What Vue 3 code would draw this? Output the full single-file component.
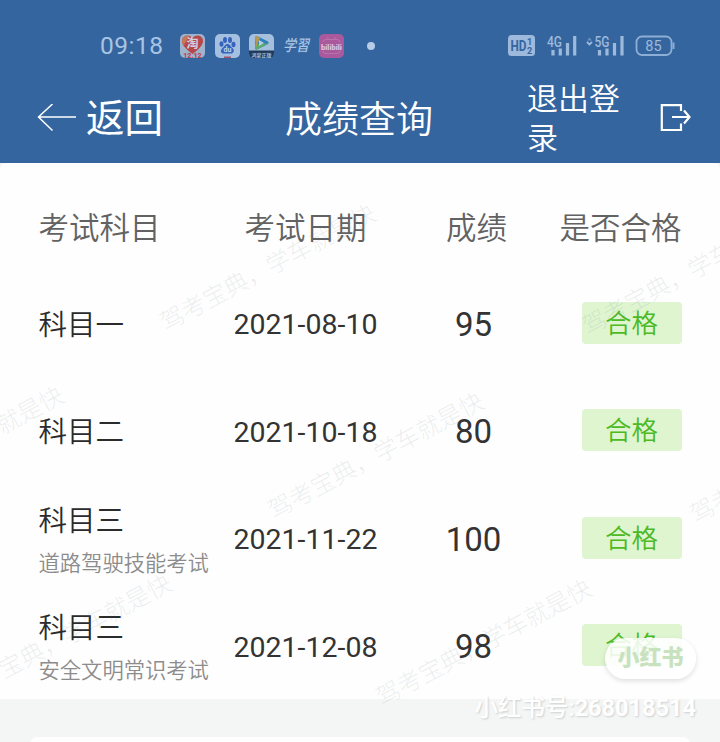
<template>
  <div class="page">
    <div class="status-bar">
      <span class="time">09:18</span>
      <div class="apps">
        <svg width="25" height="24" viewBox="0 0 25 24">
          <rect width="25" height="24" rx="5" fill="#9fb3cd" />
          <path d="M12.5 20 C6 15 1.500 11 2 6 C3 1 9 0 12.500 4 C16 0 22 1 23 6 C23.500 11 19 15 12.500 20Z" fill="#b8474c" />
          <path d="M2 6 C3 2 6 1 9 2 L4 11 Q1.500 9 2 6Z" fill="#c37958" />
          <text x="12.500" y="14" text-anchor="middle" class="app-tao">淘</text>
          <text x="12.500" y="23.500" text-anchor="middle" class="app-date">12.12</text>
        </svg>
        <svg width="25" height="24" viewBox="0 0 25 24">
          <rect width="25" height="24" rx="5" fill="#a5bfe0" />
          <g fill="#3664bd">
            <ellipse cx="6.500" cy="10" rx="2" ry="2.800" />
            <ellipse cx="10" cy="6" rx="2" ry="2.900" />
            <ellipse cx="15" cy="6" rx="2" ry="2.900" />
            <ellipse cx="18.500" cy="10.500" rx="2" ry="2.800" />
            <path d="M12.500 10 C15 10 15.500 12.500 18 14.500 C20 17 18 20 15.500 19.500 H9.500 C6 20 5 17 7 14.500 C9.500 12.500 10 10 12.500 10Z" />
          </g>
          <text x="12.500" y="18.300" text-anchor="middle" class="app-du">du</text>
          <rect x="9" y="22.500" width="7" height="1.500" fill="#a5536b" />
        </svg>
        <svg width="25" height="24" viewBox="0 0 25 24">
          <rect width="25" height="24" rx="5" fill="#a5bfdc" />
          <path d="M0 16.500 H25 V19 Q25 24 20 24 H5 Q0 24 0 19Z" fill="#203a5a" />
          <path d="M6 4 Q6 1.500 8 2 L19 7.500 Q20.500 9 19 10 L8 15.500 Q6 16 6 14Z" fill="#2f80bd" />
          <path d="M6 10 L19.500 9.500 L8 15.500 Q6 16 6 14Z" fill="#5bab68" />
          <path d="M6 4 Q6 1.500 8 2 L11 4 L7 13Z" fill="#b79754" />
          <path d="M10 6 L15 9 L10 12Z" fill="#b5cfdf" />
          <text x="12.500" y="22.500" text-anchor="middle" class="app-tv">鸿蒙正版</text>
        </svg>
        <span class="xuexi">学習</span>
        <svg width="25" height="24" viewBox="0 0 25 24">
          <rect width="25" height="24" rx="5" fill="#aa5a9c" />
          <path d="M8 3 L10 6 M17 3 L15 6 M4 8 Q4 5.500 7 5.500 H18 Q21 5.500 21 8 M4 17 Q4 19.500 7 19.500 H18 Q21 19.500 21 17" fill="none" stroke="#b973ac" stroke-width="1" />
          <text x="12.500" y="15.500" text-anchor="middle" class="app-bili">bilibili</text>
        </svg>
      </div>
      <span class="dot"></span>
      <div class="signals">
        <svg class="hd" width="27" height="21" viewBox="0 0 27 21">
          <rect width="27" height="21" rx="3.500" fill="#9db9db" />
          <text x="2.500" y="15.800" class="hd-text" textLength="16" lengthAdjust="spacingAndGlyphs">HD</text>
          <text x="19" y="9.800" class="hd-num">1</text>
          <text x="19" y="18.800" class="hd-num">2</text>
        </svg>
        <svg class="g4" width="30" height="22" viewBox="0 0 30 22">
          <text x="0" y="11.800" class="net" textLength="15" lengthAdjust="spacingAndGlyphs">4G</text>
          <path d="M6 20.500 V15 M13.300 20.500 V13.500 M20.500 20.500 V8 M27.700 20.500 V1" class="bars" />
        </svg>
        <svg class="g5" width="39" height="22" viewBox="0 0 39 22">
          <path d="M1 5.500 L3.500 2.500 L6 5.500" fill="#6791c3" />
          <path d="M1 7 L3.500 9.500 L6 7" fill="none" stroke="#9db9db" stroke-width="1.800" />
          <text x="8.500" y="11.800" class="net" textLength="15" lengthAdjust="spacingAndGlyphs">5G</text>
          <path d="M13.500 20.500 V15 M21 20.500 V13.500 M28.500 20.500 V8 M36 20.500 V1" class="bars" />
        </svg>
        <svg class="battery" width="40" height="22" viewBox="0 0 40 22">
          <rect x="1.500" y="1.500" width="35" height="18.500" rx="5.500" fill="none" stroke="#8daed5" stroke-width="1.800" />
          <path d="M38.500 7.500 V14" stroke="#8daed5" stroke-width="2" />
          <text x="18.500" y="15.700" text-anchor="middle" class="level">85</text>
        </svg>
      </div>
    </div>

    <header class="nav">
      <div class="back">
        <svg width="40" height="30" viewBox="0 0 40 30">
          <path d="M39 13 H2 M15.500 0 L1.500 13 L15.500 26.500" fill="none" stroke="#fff" stroke-width="1.500" />
        </svg>
        <span>返回</span>
      </div>
      <h1>成绩查询</h1>
      <div class="logout">
        <span>退出登录</span>
        <svg width="32" height="30" viewBox="0 0 32 30">
          <path d="M21 7 V0.500 M22 1.100 H1.800 V26 H21 V19.500 M12 13 H29 M24 6.500 L29.500 13 L24 19.500" fill="none" stroke="#fff" stroke-width="2.200" />
        </svg>
      </div>
    </header>

    <main class="content">
      <section class="scores">
        <div class="row head">
          <span>考试科目</span>
          <span class="center">考试日期</span>
          <span class="center">成绩</span>
          <span class="right">是否合格</span>
        </div>
        <div v-for="(item, index) in exams" :key="index" class="row">
          <div>
            <div class="subject">{{ item.subject }}</div>
            <div v-if="item.note" class="note">{{ item.note }}</div>
          </div>
          <span class="date center">{{ item.date }}</span>
          <span class="score center">{{ item.score }}</span>
          <div class="right"><span class="tag">合格</span></div>
        </div>
      </section>
      <section class="next-card"></section>
    </main>

    <!-- Slanted watermark tiles over the list -->
    <span
      v-for="(m, index) in marks"
      :key="'m' + index"
      class="mark"
      :style="{ left: m.x + 'px', top: m.y + 'px' }"
    >驾考宝典，学车就是快</span>

    <div class="logo">小红书</div>
    <div class="account">小红书号:<b>268018514</b></div>
  </div>
</template>

<script setup>
import { ref } from 'vue'

const exams = ref([
  { subject: '科目一', note: '', date: '2021-08-10', score: 95 },
  { subject: '科目二', note: '', date: '2021-10-18', score: 80 },
  { subject: '科目三', note: '道路驾驶技能考试', date: '2021-11-22', score: 100 },
  { subject: '科目三', note: '安全文明常识考试', date: '2021-12-08', score: 98 }
])

// Centre point of each tile
const marks = [
  { x: 268, y: 268 },
  { x: 690, y: 272 },
  { x: -44, y: 450 },
  { x: 376, y: 456 },
  { x: 798, y: 460 },
  { x: 64, y: 638 },
  { x: 484, y: 643 }
]
</script>

<style>
body {
  margin: 0;
  background: #f4f5f5;
}
</style>

<style scoped>
.page {
  position: relative;
  width: 720px;
  height: 742px;
  overflow: hidden;
  background: #34659f;
  font-family: Roboto, "Noto Sans CJK SC", sans-serif;
  font-weight: 350;
  white-space: nowrap;
}

.status-bar {
  display: flex;
  align-items: center;
  box-sizing: border-box;
  height: 75px;
  padding: 16px 45px 0 100px;
  color: #a9c4e3;
}

.time {
  width: 80px;
  font-size: 24.5px;
  font-weight: 400;
  letter-spacing: 0.5px;
}

.apps {
  display: flex;
  align-items: center;
  gap: 9.7px;
}

.app-tao {
  font-size: 12px;
  font-weight: 700;
  fill: #d1d4df;
}

.app-date {
  font-size: 7px;
  font-weight: 900;
  fill: #b8474c;
}

.app-du {
  font-size: 7px;
  font-weight: 700;
  fill: #c5d5ec;
}

.app-tv {
  font-size: 5px;
  font-weight: 700;
  fill: #a5bfdc;
}

.app-bili {
  font-size: 7.5px;
  font-weight: 900;
  fill: #d9c5df;
}

.xuexi {
  width: 25px;
  font-size: 13px;
  font-weight: 500;
  line-height: 24px;
  transform: skewX(-12deg) scaleY(1.2);
}

.dot {
  width: 8px;
  height: 8px;
  margin-left: 23px;
  border-radius: 50%;
  background: #b7cde7;
}

.signals {
  display: flex;
  align-items: center;
  margin-left: auto;
}

.g4 {
  margin-left: 12px;
}

.g5 {
  margin-left: 9px;
}

.battery {
  margin-left: 10.5px;
}

.hd-text {
  font-size: 15px;
  font-weight: 700;
  fill: #34659f;
}

.hd-num {
  font-size: 9px;
  font-weight: 700;
  fill: #34659f;
}

.net {
  font-size: 14px;
  font-weight: 500;
  fill: #9db9db;
}

.bars {
  fill: none;
  stroke: #9db9db;
  stroke-width: 3.2;
}

.level {
  font-size: 14.5px;
  font-weight: 400;
  fill: #9db9db;
}

.nav {
  display: grid;
  grid-template-columns: 248px 242px 1fr;
  align-items: center;
  height: 88px;
  padding: 0 28px 0 37px;
  color: #fff;
}

.back {
  display: flex;
  align-items: center;
  gap: 9px;
  font-size: 38.5px;
  font-weight: 400;
  line-height: 82px;
}

.nav h1 {
  margin: 0;
  padding-top: 4px;
  font-size: 37px;
  font-weight: 350;
  line-height: 82px;
}

.logout {
  display: flex;
  align-items: center;
  justify-content: space-between;
}

.logout span {
  width: 96px;
  font-size: 31px;
  line-height: 39px;
  white-space: normal;
}

.content {
  height: 579px;
  background: #f4f5f5;
}

.scores {
  box-sizing: border-box;
  height: 536px;
  padding-top: 22px;
  background: #fefefe;
  border-radius: 7px 7px 0 0;
}

.row {
  display: grid;
  grid-template-columns: 176px 182px 160px 125px;
  align-items: center;
  height: 107.500px;
  padding-left: 38.5px;
}

.head {
  height: 84px;
  padding-bottom: 3px;
  margin-bottom: -3px;
  box-sizing: border-box;
  font-size: 30.5px;
  color: #626262;
}

.head + .row {
  margin-top: 3px;
}

.center {
  text-align: center;
}

.right {
  text-align: right;
}

.subject {
  padding-top: 5px;
  font-size: 28.5px;
  line-height: 43px;
  color: #2b2b2b;
}

.note {
  padding-top: 1px;
  margin-bottom: -3px;
  font-size: 21.3px;
  line-height: 40px;
  color: #8c8c8c;
}

.date {
  padding-top: 4px;
  font-size: 28.5px;
  font-weight: 400;
  color: #333;
}

.score {
  padding-top: 3px;
  padding-right: 6px;
  font-size: 33px;
  font-weight: 400;
  color: #333;
}

.tag {
  display: inline-block;
  width: 100px;
  height: 42px;
  border-radius: 4px;
  background: #def5d0;
  color: #4dba24;
  font-size: 26.5px;
  line-height: 43px;
  text-align: center;
  vertical-align: middle;
}

.next-card {
  height: 20px;
  margin: 38px 30px 0;
  border-radius: 7px;
  background: #fefefe;
}

.mark {
  position: absolute;
  color: rgba(90, 110, 120, 0.12);
  font-size: 24px;
  font-weight: 300;
  line-height: 30px;
  transform: translate(-50%, -50%) rotate(-28deg);
}

.logo {
  position: absolute;
  left: 605px;
  top: 638px;
  width: 91px;
  height: 41px;
  border-radius: 21px;
  background: rgba(255, 255, 255, 0.88);
  box-shadow: 0 2px 5px rgba(0, 0, 0, 0.13);
  color: #c8e2c0;
  font-size: 22px;
  font-weight: 900;
  line-height: 40px;
  text-align: center;
}

.account {
  position: absolute;
  right: 24px;
  top: 692px;
  color: #fff;
  font-size: 23.500px;
  font-weight: 500;
  line-height: 32px;
  text-shadow: 1px 1px 2px rgba(0, 0, 0, 0.16);
}

.account b {
  font-weight: 700;
}
</style>
